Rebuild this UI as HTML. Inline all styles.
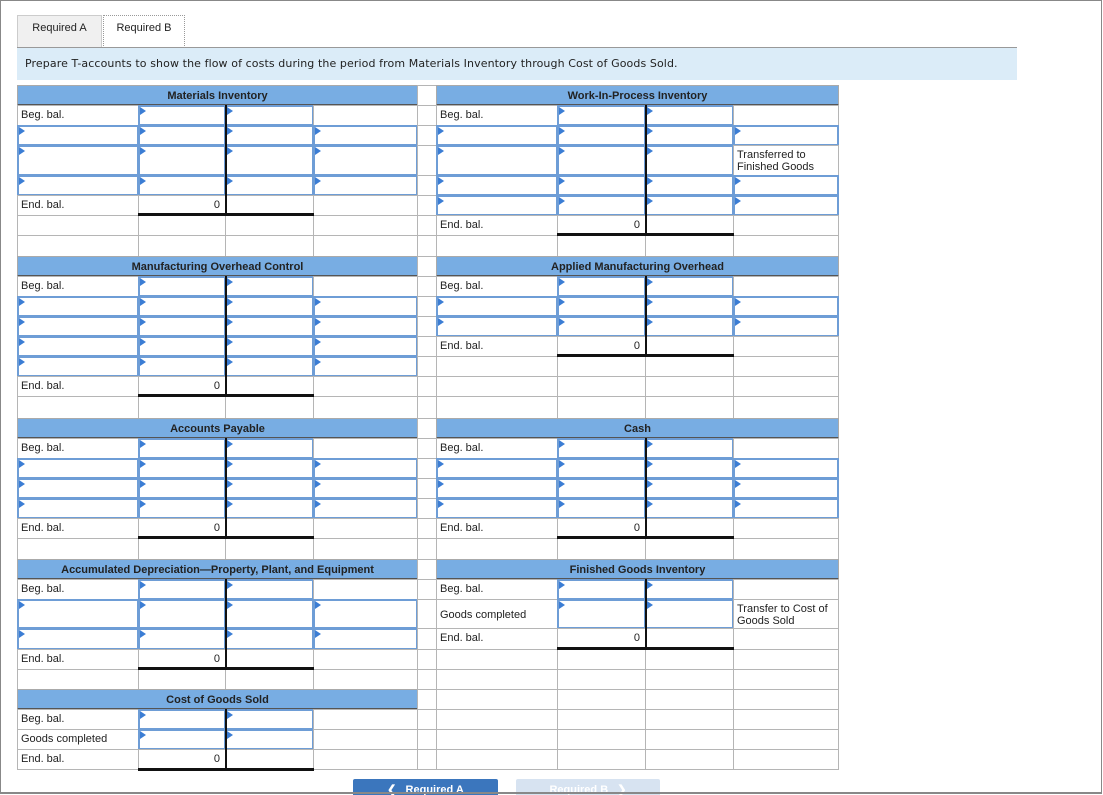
<!DOCTYPE html>
<html><head><meta charset="utf-8">
<style>
html,body{margin:0;padding:0;background:#fff;width:1103px;height:795px;overflow:hidden;position:relative;font-family:"Liberation Sans",Arial,sans-serif}
.frame{position:absolute;left:0;top:0;width:1102px;height:794px;box-sizing:border-box;border:1px solid #888;border-bottom:2px solid #888;z-index:50;pointer-events:none}
.tab{position:absolute;top:15px;height:33px;box-sizing:border-box;font:11px "Liberation Sans",sans-serif;color:#222;text-align:center;line-height:24px}
.instr{position:absolute;left:17px;top:47px;width:1000px;height:33px;background:#dbecf8;border-top:1px solid #999;box-sizing:border-box;font:11px "DejaVu Sans",sans-serif;color:#222;padding:9px 0 0 8px;letter-spacing:0.1px}
.r{position:absolute;left:0;width:1103px}
.r>div{position:absolute;top:0;bottom:0;box-sizing:border-box;border:1px solid #b5b5b5;background:#fff;font:11px "Liberation Sans",sans-serif;color:#222;padding:3px 3px;line-height:12px}
.a{left:17px;width:122px}.b{left:138px;width:88px}.c{left:225px;width:89px}.d{left:313px;width:105px}
.s{left:417px;width:20px}.e{left:436px;width:122px}.f{left:557px;width:89px}.g{left:645px;width:89px}.h{left:733px;width:106px}
.r>.i{border:2px solid #6e9dd6}
.i::before{content:"";position:absolute;left:0;top:0;border-left:6px solid #3b7dd4;border-top:4px solid transparent;border-bottom:4px solid transparent}
.r>.v{text-align:right;padding-right:5px}
.r>.H{background:#78ade3;font-weight:bold;text-align:center;color:#222;border-color:#aaa;border-bottom:2px solid #555;padding-top:4px}
.vl{position:absolute;width:2px;background:#111;z-index:5}
.ul{position:absolute;height:3px;background:#111;z-index:5}
.btn{position:absolute;top:779px;height:20px;font:bold 11px "Liberation Sans",sans-serif;text-align:center;line-height:22px;border-radius:2px}
</style></head><body>
<div class="frame"></div>
<div class="tab" style="left:17px;width:85px;background:#f0f0f0;border:1px solid #ccc">Required A</div>
<div class="tab" style="left:103px;width:82px;background:#fff;border:1px dotted #999;border-bottom:none">Required B</div>
<div class="instr">Prepare T-accounts to show the flow of costs during the period from Materials Inventory through Cost of Goods Sold.</div>

<!-- Section 1 -->
<div class="r" style="top:85px;height:21px"><div class="H" style="left:17px;width:401px">Materials Inventory</div><div class="s"></div><div class="H" style="left:436px;width:403px">Work-In-Process Inventory</div></div>
<div class="r" style="top:105px;height:21px"><div class="a">Beg. bal.</div><div class="b i"></div><div class="c i"></div><div class="d"></div><div class="s"></div><div class="e">Beg. bal.</div><div class="f i"></div><div class="g i"></div><div class="h"></div></div>
<div class="r" style="top:125px;height:21px"><div class="a i"></div><div class="b i"></div><div class="c i"></div><div class="d i"></div><div class="s"></div><div class="e i"></div><div class="f i"></div><div class="g i"></div><div class="h i"></div></div>
<div class="r" style="top:145px;height:31px"><div class="a i"></div><div class="b i"></div><div class="c i"></div><div class="d i"></div><div class="s"></div><div class="e i"></div><div class="f i"></div><div class="g i"></div><div class="h">Transferred to Finished Goods</div></div>
<div class="r" style="top:175px;height:21px"><div class="a i"></div><div class="b i"></div><div class="c i"></div><div class="d i"></div><div class="s"></div><div class="e i"></div><div class="f i"></div><div class="g i"></div><div class="h i"></div></div>
<div class="r" style="top:195px;height:21px"><div class="a">End. bal.</div><div class="b v">0</div><div class="c"></div><div class="d"></div><div class="s"></div><div class="e i"></div><div class="f i"></div><div class="g i"></div><div class="h i"></div></div>
<div class="r" style="top:215px;height:21px"><div class="a"></div><div class="b"></div><div class="c"></div><div class="d"></div><div class="s"></div><div class="e">End. bal.</div><div class="f v">0</div><div class="g"></div><div class="h"></div></div>
<div class="r" style="top:235px;height:22px"><div class="a"></div><div class="b"></div><div class="c"></div><div class="d"></div><div class="s"></div><div class="e"></div><div class="f"></div><div class="g"></div><div class="h"></div></div>
<div class="vl" style="left:225px;top:105px;height:110px"></div><div class="ul" style="left:138px;top:213px;width:176px"></div>
<div class="vl" style="left:645px;top:105px;height:131px"></div><div class="ul" style="left:557px;top:233px;width:177px"></div>

<!-- Section 2 -->
<div class="r" style="top:256px;height:21px"><div class="H" style="left:17px;width:401px">Manufacturing Overhead Control</div><div class="s"></div><div class="H" style="left:436px;width:403px">Applied Manufacturing Overhead</div></div>
<div class="r" style="top:276px;height:21px"><div class="a">Beg. bal.</div><div class="b i"></div><div class="c i"></div><div class="d"></div><div class="s"></div><div class="e">Beg. bal.</div><div class="f i"></div><div class="g i"></div><div class="h"></div></div>
<div class="r" style="top:296px;height:21px"><div class="a i"></div><div class="b i"></div><div class="c i"></div><div class="d i"></div><div class="s"></div><div class="e i"></div><div class="f i"></div><div class="g i"></div><div class="h i"></div></div>
<div class="r" style="top:316px;height:21px"><div class="a i"></div><div class="b i"></div><div class="c i"></div><div class="d i"></div><div class="s"></div><div class="e i"></div><div class="f i"></div><div class="g i"></div><div class="h i"></div></div>
<div class="r" style="top:336px;height:21px"><div class="a i"></div><div class="b i"></div><div class="c i"></div><div class="d i"></div><div class="s"></div><div class="e">End. bal.</div><div class="f v">0</div><div class="g"></div><div class="h"></div></div>
<div class="r" style="top:356px;height:21px"><div class="a i"></div><div class="b i"></div><div class="c i"></div><div class="d i"></div><div class="s"></div><div class="e"></div><div class="f"></div><div class="g"></div><div class="h"></div></div>
<div class="r" style="top:376px;height:21px"><div class="a">End. bal.</div><div class="b v">0</div><div class="c"></div><div class="d"></div><div class="s"></div><div class="e"></div><div class="f"></div><div class="g"></div><div class="h"></div></div>
<div class="r" style="top:396px;height:23px"><div class="a"></div><div class="b"></div><div class="c"></div><div class="d"></div><div class="s"></div><div class="e"></div><div class="f"></div><div class="g"></div><div class="h"></div></div>
<div class="vl" style="left:225px;top:276px;height:120px"></div><div class="ul" style="left:138px;top:394px;width:176px"></div>
<div class="vl" style="left:645px;top:276px;height:80px"></div><div class="ul" style="left:557px;top:354px;width:177px"></div>

<!-- Section 3 -->
<div class="r" style="top:418px;height:21px"><div class="H" style="left:17px;width:401px">Accounts Payable</div><div class="s"></div><div class="H" style="left:436px;width:403px">Cash</div></div>
<div class="r" style="top:438px;height:21px"><div class="a">Beg. bal.</div><div class="b i"></div><div class="c i"></div><div class="d"></div><div class="s"></div><div class="e">Beg. bal.</div><div class="f i"></div><div class="g i"></div><div class="h"></div></div>
<div class="r" style="top:458px;height:21px"><div class="a i"></div><div class="b i"></div><div class="c i"></div><div class="d i"></div><div class="s"></div><div class="e i"></div><div class="f i"></div><div class="g i"></div><div class="h i"></div></div>
<div class="r" style="top:478px;height:21px"><div class="a i"></div><div class="b i"></div><div class="c i"></div><div class="d i"></div><div class="s"></div><div class="e i"></div><div class="f i"></div><div class="g i"></div><div class="h i"></div></div>
<div class="r" style="top:498px;height:21px"><div class="a i"></div><div class="b i"></div><div class="c i"></div><div class="d i"></div><div class="s"></div><div class="e i"></div><div class="f i"></div><div class="g i"></div><div class="h i"></div></div>
<div class="r" style="top:518px;height:21px"><div class="a">End. bal.</div><div class="b v">0</div><div class="c"></div><div class="d"></div><div class="s"></div><div class="e">End. bal.</div><div class="f v">0</div><div class="g"></div><div class="h"></div></div>
<div class="r" style="top:538px;height:22px"><div class="a"></div><div class="b"></div><div class="c"></div><div class="d"></div><div class="s"></div><div class="e"></div><div class="f"></div><div class="g"></div><div class="h"></div></div>
<div class="vl" style="left:225px;top:438px;height:100px"></div><div class="ul" style="left:138px;top:536px;width:176px"></div>
<div class="vl" style="left:645px;top:438px;height:100px"></div><div class="ul" style="left:557px;top:536px;width:177px"></div>

<!-- Section 4 -->
<div class="r" style="top:559px;height:21px"><div class="H" style="left:17px;width:401px">Accumulated Depreciation—Property, Plant, and Equipment</div><div class="s"></div><div class="H" style="left:436px;width:403px">Finished Goods Inventory</div></div>
<div class="r" style="top:579px;height:21px"><div class="a">Beg. bal.</div><div class="b i"></div><div class="c i"></div><div class="d"></div><div class="s"></div><div class="e">Beg. bal.</div><div class="f i"></div><div class="g i"></div><div class="h"></div></div>
<div class="r" style="top:599px;height:30px"><div class="a i"></div><div class="b i"></div><div class="c i"></div><div class="d i"></div><div class="s"></div><div class="e" style="padding-top:9px">Goods completed</div><div class="f i"></div><div class="g i"></div><div class="h">Transfer to Cost of Goods Sold</div></div>
<div class="r" style="top:628px;height:22px"><div class="a i"></div><div class="b i"></div><div class="c i"></div><div class="d i"></div><div class="s"></div><div class="e">End. bal.</div><div class="f v">0</div><div class="g"></div><div class="h"></div></div>
<div class="r" style="top:649px;height:21px"><div class="a">End. bal.</div><div class="b v">0</div><div class="c"></div><div class="d"></div><div class="s"></div><div class="e"></div><div class="f"></div><div class="g"></div><div class="h"></div></div>
<div class="r" style="top:669px;height:21px"><div class="a"></div><div class="b"></div><div class="c"></div><div class="d"></div><div class="s"></div><div class="e"></div><div class="f"></div><div class="g"></div><div class="h"></div></div>
<div class="vl" style="left:225px;top:579px;height:90px"></div><div class="ul" style="left:138px;top:667px;width:176px"></div>
<div class="vl" style="left:645px;top:579px;height:70px"></div><div class="ul" style="left:557px;top:647px;width:177px"></div>

<!-- Section 5 -->
<div class="r" style="top:689px;height:21px"><div class="H" style="left:17px;width:401px">Cost of Goods Sold</div><div class="s"></div><div class="e"></div><div class="f"></div><div class="g"></div><div class="h"></div></div>
<div class="r" style="top:709px;height:21px"><div class="a">Beg. bal.</div><div class="b i"></div><div class="c i"></div><div class="d"></div><div class="s"></div><div class="e"></div><div class="f"></div><div class="g"></div><div class="h"></div></div>
<div class="r" style="top:729px;height:21px"><div class="a">Goods completed</div><div class="b i"></div><div class="c i"></div><div class="d"></div><div class="s"></div><div class="e"></div><div class="f"></div><div class="g"></div><div class="h"></div></div>
<div class="r" style="top:749px;height:21px"><div class="a">End. bal.</div><div class="b v">0</div><div class="c"></div><div class="d"></div><div class="s"></div><div class="e"></div><div class="f"></div><div class="g"></div><div class="h"></div></div>
<div class="vl" style="left:225px;top:709px;height:60px"></div><div class="ul" style="left:138px;top:768px;width:176px"></div>

<div class="btn" style="left:353px;width:145px;background:#3b76bd;color:#fff">&#10094;&nbsp;&nbsp; Required A</div>
<div class="btn" style="left:516px;width:144px;background:#d7e3f1;color:#fff">Required B &nbsp;&nbsp;&#10095;</div>
</body></html>
